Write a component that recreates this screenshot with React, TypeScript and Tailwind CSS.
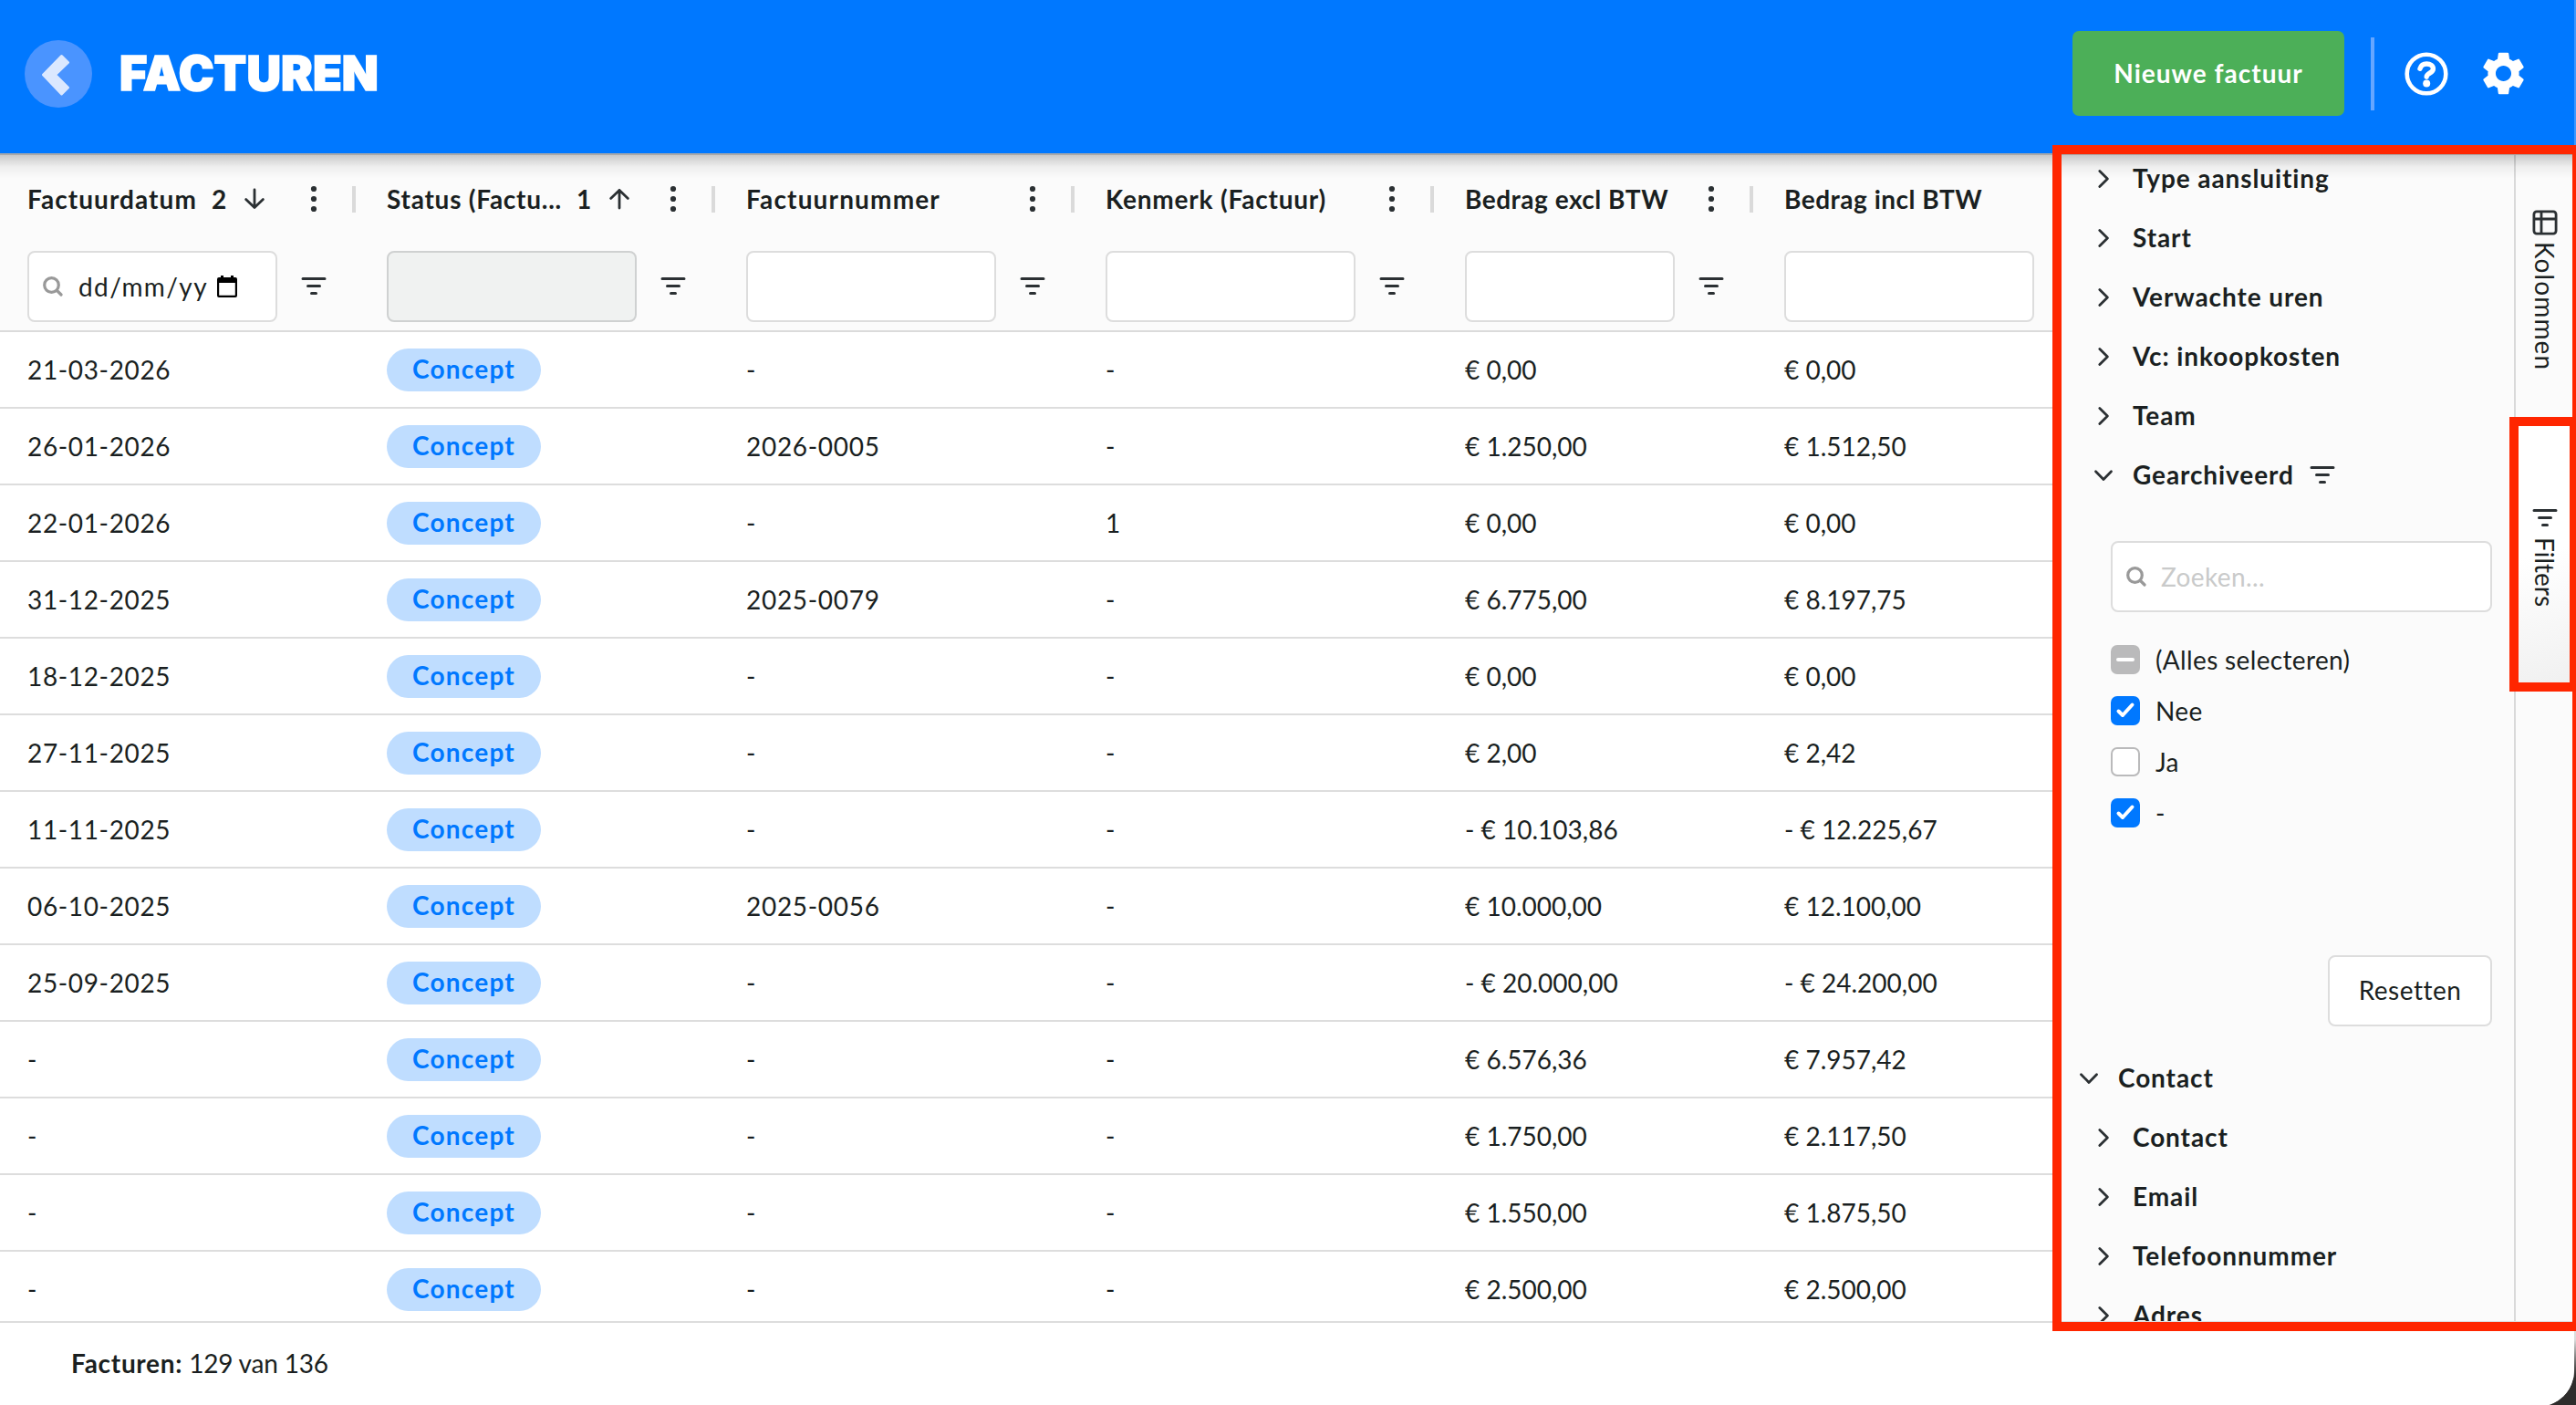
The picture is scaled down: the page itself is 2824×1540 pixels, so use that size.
import React from "react";
import { MdSettings } from "react-icons/md";

const INK = "#2b3033";

function FilterIcon() {
  return (
    <svg width="28" height="20" viewBox="0 0 28 20" className="shrink-0" stroke={INK} strokeWidth="3" strokeLinecap="round">
      <path d="M2 1.5h24M7.5 9.5h13M11.5 17.5h5" />
    </svg>
  );
}

function SearchIcon() {
  return (
    <svg width="22" height="22" viewBox="0 0 22 22" fill="none" stroke="#999" strokeWidth="3.2" strokeLinecap="round" className="shrink-0">
      <circle cx="9.5" cy="9.5" r="7.8" />
      <path d="M15.5 15.5l4.5 4.5" />
    </svg>
  );
}

function CalendarIcon() {
  return (
    <svg width="22" height="24" viewBox="0 0 22 24" className="shrink-0">
      <path d="M2 2h2V0h3v2h8V0h3v2h2a2 2 0 0 1 2 2v18a2 2 0 0 1-2 2H2a2 2 0 0 1-2-2V4a2 2 0 0 1 2-2zM2.2 8v13.8h17.6V8z" fill="#000" fillRule="evenodd" />
    </svg>
  );
}

function Dots() {
  return (
    <svg width="8" height="30" viewBox="0 0 8 30" fill={INK} className="shrink-0">
      <circle cx="4" cy="4" r="3.1" />
      <circle cx="4" cy="15" r="3.1" />
      <circle cx="4" cy="26" r="3.1" />
    </svg>
  );
}

function SortArrow({ up }: { up?: boolean }) {
  return (
    <svg width="24" height="24" viewBox="0 0 24 24" fill="none" stroke={INK} strokeWidth="2.8" strokeLinecap="round" strokeLinejoin="round" className={up ? "shrink-0 rotate-180" : "shrink-0"}>
      <path d="M12 2v19.5M2.6 12.6l9.4 9 9.4-9" />
    </svg>
  );
}

function Chevron({ open }: { open?: boolean }) {
  return (
    <svg width="24" height="24" viewBox="0 0 24 24" fill="none" stroke={INK} strokeWidth="2.8" strokeLinecap="round" strokeLinejoin="round" className="shrink-0">
      {open ? <path d="M3.5 7.8l8.5 8.6 8.5-8.6" /> : <path d="M7.8 3.5l8.6 8.5-8.6 8.5" />}
    </svg>
  );
}

type Col = { label: string; box: string; cell: string; menu?: boolean; kind?: "date" | "disabled"; order?: string; up?: boolean; ls: string };

const columns: Col[] = [
  { label: "Factuurdatum", box: "w-[274px]", cell: "w-[394px]", menu: true, kind: "date", order: "2", ls: "tracking-[1.05px]" },
  { label: "Status (Factu...", box: "w-[274px]", cell: "w-[394px]", menu: true, kind: "disabled", order: "1", up: true, ls: "tracking-[0.75px]" },
  { label: "Factuurnummer", box: "w-[274px]", cell: "w-[394px]", menu: true, ls: "tracking-[1.15px]" },
  { label: "Kenmerk (Factuur)", box: "w-[274px]", cell: "w-[394px]", menu: true, ls: "tracking-[0.8px]" },
  { label: "Bedrag excl BTW", box: "w-[230px]", cell: "w-[350px]", menu: true, ls: "tracking-[0.5px]" },
  { label: "Bedrag incl BTW", box: "w-[274px]", cell: "w-[324px]", ls: "tracking-[0.5px]" },
];

const rows = [
  ["21-03-2026", "-", "-", "€ 0,00", "€ 0,00"],
  ["26-01-2026", "2026-0005", "-", "€ 1.250,00", "€ 1.512,50"],
  ["22-01-2026", "-", "1", "€ 0,00", "€ 0,00"],
  ["31-12-2025", "2025-0079", "-", "€ 6.775,00", "€ 8.197,75"],
  ["18-12-2025", "-", "-", "€ 0,00", "€ 0,00"],
  ["27-11-2025", "-", "-", "€ 2,00", "€ 2,42"],
  ["11-11-2025", "-", "-", "- € 10.103,86", "- € 12.225,67"],
  ["06-10-2025", "2025-0056", "-", "€ 10.000,00", "€ 12.100,00"],
  ["25-09-2025", "-", "-", "- € 20.000,00", "- € 24.200,00"],
  ["-", "-", "-", "€ 6.576,36", "€ 7.957,42"],
  ["-", "-", "-", "€ 1.750,00", "€ 2.117,50"],
  ["-", "-", "-", "€ 1.550,00", "€ 1.875,50"],
  ["-", "-", "-", "€ 2.500,00", "€ 2.500,00"],
];

function Header() {
  return (
    <header className="flex h-[168px] shrink-0 items-start bg-[#0078ff] text-white">
      <div className="ml-[27px] mt-11 flex size-[74px] items-center justify-center rounded-full bg-[#4a94ff]">
        <svg width="32" height="46" viewBox="0 0 32 46" fill="#dbe8ff" stroke="#dbe8ff" strokeWidth="3" strokeLinejoin="round" className="-ml-1.5 mt-0.5">
          <path d="M22.5 2.5l7 7L15.5 23l14 14-7 7L2.5 23z" />
        </svg>
      </div>
      <h1 className="ml-[30px] mt-[51px] font-['Inter'] text-[52px] leading-[60px] font-black tracking-[0.1px] [-webkit-text-stroke:1.5px_white]">FACTUREN</h1>
      <div className="ml-auto flex pt-[34px] pr-[55px]">
        <button className="flex h-[93px] w-[298px] items-center justify-center rounded-[7px] bg-[#4caf58] pb-0.5 text-[28px] font-bold tracking-[1px]">Nieuwe factuur</button>
        <div className="ml-[29px] mt-[7px] h-20 w-1 bg-[#66a6ff]" />
        <svg width="48" height="48" viewBox="0 0 48 48" fill="none" className="ml-[33px] mt-[23px]">
          <circle cx="24" cy="24" r="21.3" stroke="#fff" strokeWidth="4.6" />
          <path d="M17 18.2c1-3.200 3.600-5.200 7.200-5.200 4.200 0 7.200 2 7.200 5.400 0 4.800-7 4.600-7.200 8.800" stroke="#fff" strokeWidth="5.400" strokeLinecap="round" />
          <circle cx="24.200" cy="34.600" r="4" fill="#fff" />
        </svg>
        <MdSettings size={57} className="ml-[32px] mt-[18px] -mr-[6px]" />
      </div>
    </header>
  );
}

function ColumnHead({ c }: { c: Col }) {
  return (
    <div className={`flex shrink-0 flex-col pl-[30px] ${c.cell}`}>
      <div className="flex h-[100px] items-center text-[28px] font-bold">
        <span className={`-mt-px whitespace-nowrap ${c.ls}`}>{c.label}</span>
        {c.order && (
          <>
            <span className="-mt-px ml-[16px]">{c.order}</span>
            <span className="ml-[19px]"><SortArrow up={c.up} /></span>
          </>
        )}
        {c.menu && (
          <div className="ml-auto flex items-center">
            <Dots />
            <div className="ml-[38px] mr-1 h-[29px] w-1 bg-[#dadada]" />
          </div>
        )}
      </div>
      <div className="mt-[7px] flex items-center">
        <div className={`flex h-[78px] shrink-0 items-center rounded-lg border-2 ${c.box} ${c.kind === "disabled" ? "border-[#cfd1d1] bg-[#f0f2f1]" : "border-[#dddddd] bg-white"}`}>
          {c.kind === "date" && (
            <div className="flex items-center pl-[15px]">
              <SearchIcon />
              <span className="ml-[17px] w-[146px] text-[28px] tracking-[1.4px]">dd/mm/yy</span>
              <span className="ml-[6px]"><CalendarIcon /></span>
            </div>
          )}
        </div>
        {c.menu && <span className="ml-[26px]"><FilterIcon /></span>}
      </div>
    </div>
  );
}

function Grid() {
  return (
    <section className="flex w-[2250px] shrink-0 flex-col overflow-hidden bg-white">
      <div className="flex h-[196px] shrink-0 border-b-2 border-[#dbdbdb] bg-[#fbfbfb]">
        {columns.map((c) => (
          <ColumnHead key={c.label} c={c} />
        ))}
      </div>
      {rows.map((r, i) => (
        <div key={i} className="flex h-[84px] shrink-0 items-center border-b-2 border-[#dddddd] text-[28px]">
          <div className="w-[394px] pl-[30px] tracking-[0.65px]">{r[0]}</div>
          <div className="w-[394px] pl-[30px]">
            <span className="flex h-[47px] w-[169px] items-center justify-center rounded-full bg-[#bfddff] pb-0.5 font-bold tracking-[1.2px] text-[#0078ff]">Concept</span>
          </div>
          <div className="w-[394px] pl-[30px] tracking-[0.7px]">{r[1]}</div>
          <div className="w-[394px] pl-[30px]">{r[2]}</div>
          <div className="w-[350px] pl-[30px]">{r[3]}</div>
          <div className="w-[324px] pl-[30px]">{r[4]}</div>
        </div>
      ))}
    </section>
  );
}

function Item({ label, open, group, filtered }: { label: string; open?: boolean; group?: boolean; filtered?: boolean }) {
  return (
    <div className={`flex h-[65px] shrink-0 items-center text-[28px] font-bold tracking-[0.9px] ${group ? "pl-[28px]" : "pl-[44px]"}`}>
      <Chevron open={open} />
      <span className={group ? "-mt-px ml-[20px]" : "-mt-px ml-[20px]"}>{label}</span>
      {filtered && <span className="ml-[17px]"><FilterIcon /></span>}
    </div>
  );
}

function Check({ label, state }: { label: string; state: "on" | "off" | "mixed" }) {
  const tone = state === "on" ? "bg-[#0078ff]" : state === "mixed" ? "bg-[#bababb]" : "border-2 border-[#bababb] bg-white";
  return (
    <div className="flex h-14 items-center">
      <span className={`flex size-8 items-center justify-center rounded-[7px] ${tone}`}>
        <svg width="24" height="24" viewBox="0 0 24 24" fill="none" stroke="#fff" strokeWidth="4" strokeLinecap="round" strokeLinejoin="round">
          {state === "on" && <path d="M4.500 12.500l4.500 4.500 10.500-11.500" />}
          {state === "mixed" && <path d="M4 12h16" />}
        </svg>
      </span>
      <span className="ml-[17px] text-[28px] tracking-[0.35px]">{label}</span>
    </div>
  );
}

function FilterPanel() {
  return (
    <aside className="flex w-[506px] shrink-0 flex-col overflow-hidden bg-[#fbfbfb]">
      <div className="-mt-[5px] flex flex-col">
        {["Type aansluiting", "Start", "Verwachte uren", "Vc: inkoopkosten", "Team"].map((t) => (
          <Item key={t} label={t} />
        ))}
        <Item label="Gearchiveerd" open filtered />
        <div className="ml-16 mt-[40px] flex w-[418px] flex-col">
          <div className="flex h-[78px] items-center rounded-lg border-2 border-[#dddddd] bg-white pl-[15px]">
            <SearchIcon />
            <span className="ml-[16px] text-[28px] tracking-[0.4px] text-[#c9caca]">Zoeken...</span>
          </div>
          <div className="mt-6 flex flex-col">
            <Check label="(Alles selecteren)" state="mixed" />
            <Check label="Nee" state="on" />
            <Check label="Ja" state="off" />
            <Check label="-" state="on" />
          </div>
          <button className="ml-auto mt-32 flex h-[78px] w-[180px] items-center justify-center rounded-lg border-2 border-[#dddddd] bg-white pb-0.5 text-[28px] tracking-[0.5px]">Resetten</button>
        </div>
        <div className="mt-6 flex flex-col">
          <Item label="Contact" open group />
          {["Contact", "Email", "Telefoonnummer", "Adres"].map((t) => (
            <Item key={t} label={t} />
          ))}
        </div>
      </div>
    </aside>
  );
}

function SideTabs() {
  return (
    <nav className="flex w-[66px] shrink-0 flex-col border-l-2 border-[#d9d9d9] bg-[#fbfbfb]">
      <div className="flex h-[293px] flex-col items-center pt-[62px]">
        <svg width="28" height="28" viewBox="0 0 28 28" fill="none" stroke={INK} strokeWidth="2.800">
          <rect x="1.900" y="1.900" width="24.200" height="24.200" rx="3" />
          <path d="M2 10h24M10 2v24" />
        </svg>
        <span className="mt-[7px] text-[28px] leading-[30px] tracking-[1.1px] [writing-mode:vertical-rl]">Kolommen</span>
      </div>
      <div className="flex h-[289px] flex-col items-center bg-linear-165 from-white from-50% to-[#f0f0f0] pt-[97px]">
        <FilterIcon />
        <span className="mt-[11px] text-[28px] leading-[30px] [writing-mode:vertical-rl]">Filters</span>
      </div>
    </nav>
  );
}

export default function App() {
  return (
    <div className="relative h-[1540px] w-[2824px] overflow-hidden bg-[#2e2c2b] font-['Lato','Liberation_Sans',sans-serif] text-[#1a1f21]">
      {/* window edge strip */}
      <div className="absolute right-0 top-0 flex w-0.5 flex-col">
        <div className="h-[168px] bg-[#3d97ff]" />
        <div className="h-[1300px] bg-[#dcdcdc]" />
        <div className="h-10 bg-linear-to-b from-[#dcdcdc] to-[#2e2c2b]" />
      </div>
      <div className="flex h-[1542px] w-[2822px] flex-col overflow-hidden rounded-br-[40px] bg-white">
        <Header />
        <main className="flex h-[1280px] shrink-0 overflow-hidden">
          <Grid />
          <FilterPanel />
          <SideTabs />
        </main>
        <footer className="flex h-[90px] shrink-0 items-center gap-[7px] border-t-2 border-[#dddddd] bg-white pl-[78px] text-[28px]">
          <b className="font-bold tracking-[0.7px]">Facturen:</b>
          <span className="tracking-[-0.2px]">129 van 136</span>
        </footer>
      </div>
      {/* header drop shadow */}
      <div className="absolute left-0 top-[168px] h-7 w-[2822px] border-t-2 border-[#a9a9a9] bg-linear-to-b from-black/20 via-black/5 to-transparent" />
      {/* annotation frames */}
      <div className="absolute left-[2250px] top-[159px] h-[1300px] w-[580px] border-[10px] border-[#ff2600]" />
      <div className="absolute left-[2820px] top-[159px] h-[1300px] w-1 bg-[#ff2600]" />
      <div className="absolute left-[2751px] top-[457px] h-[301px] w-[76px] border-[10px] border-[#ff2600]" />
    </div>
  );
}
